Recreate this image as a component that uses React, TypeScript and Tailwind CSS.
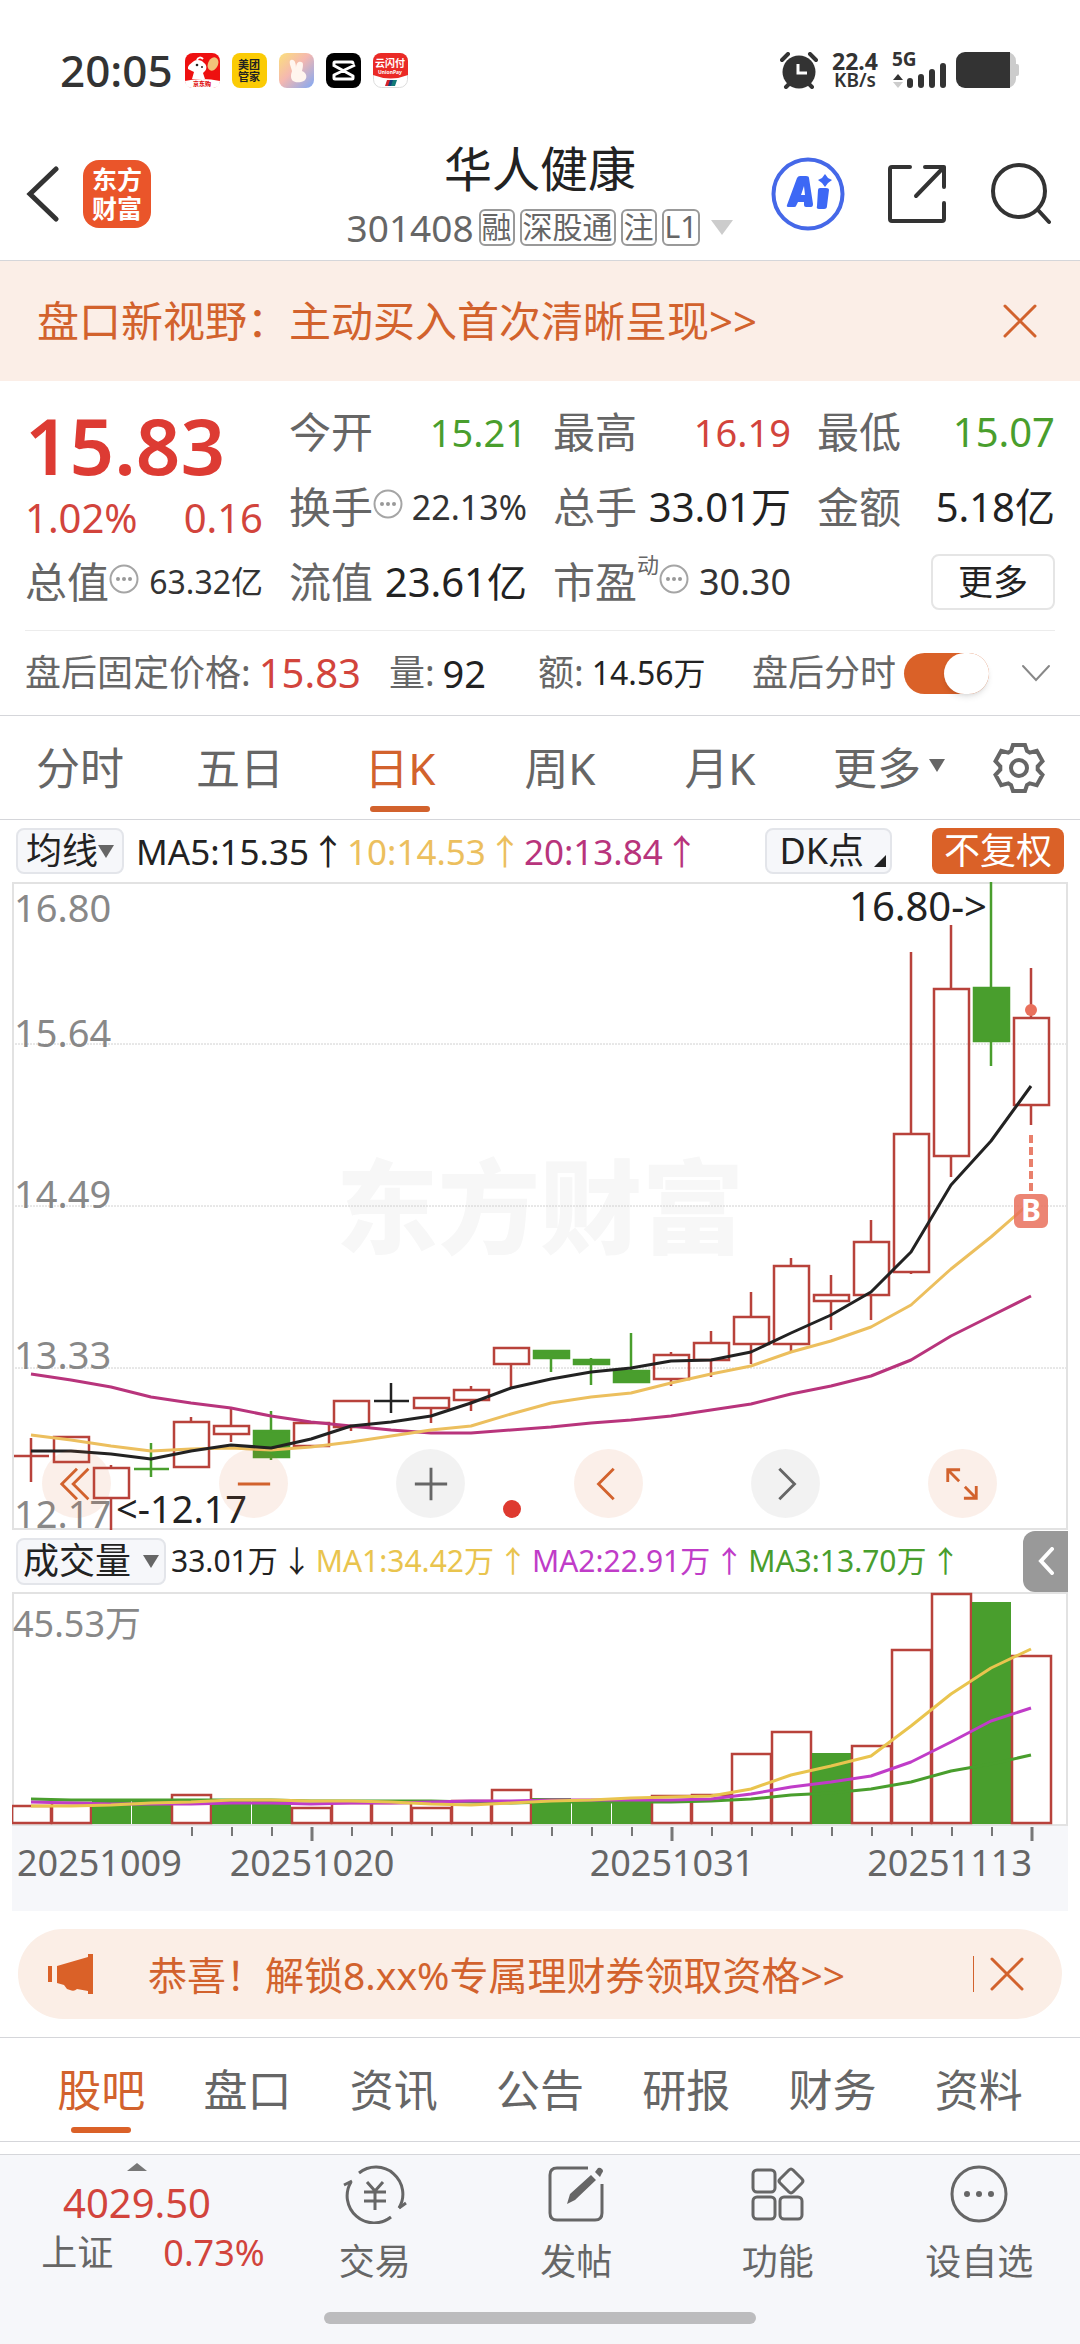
import type { ReactNode } from 'react'
import clsx from 'clsx'

type Tone = 'up' | 'down' | 'flat'

interface Candle {
  high: number
  top: number
  bottom: number
  low: number
  tone: Tone
}

const COLORS: Record<Tone, string> = { up: '#b8423b', down: '#499e2d', flat: '#222222' }

const STEP = 40
const FIRST_X = 19

const CANDLES: Candle[] = [
  { high: 556, top: 574, bottom: 574, low: 600, tone: 'up' },
  { high: 554, top: 555, bottom: 580, low: 580, tone: 'up' },
  { high: 583, top: 586, bottom: 616, low: 648, tone: 'up' },
  { high: 561, top: 587, bottom: 587, low: 595, tone: 'down' },
  { high: 535, top: 540, bottom: 585, low: 586, tone: 'up' },
  { high: 526, top: 544, bottom: 552, low: 560, tone: 'up' },
  { high: 529, top: 549, bottom: 575, low: 578, tone: 'down' },
  { high: 541, top: 541, bottom: 564, low: 564, tone: 'up' },
  { high: 519, top: 519, bottom: 545, low: 549, tone: 'up' },
  { high: 501, top: 519, bottom: 519, low: 531, tone: 'flat' },
  { high: 515, top: 516, bottom: 526, low: 541, tone: 'up' },
  { high: 504, top: 508, bottom: 518, low: 529, tone: 'up' },
  { high: 465, top: 466, bottom: 482, low: 506, tone: 'up' },
  { high: 468, top: 469, bottom: 476, low: 490, tone: 'down' },
  { high: 476, top: 478, bottom: 482, low: 503, tone: 'down' },
  { high: 451, top: 489, bottom: 500, low: 500, tone: 'down' },
  { high: 470, top: 473, bottom: 497, low: 504, tone: 'up' },
  { high: 449, top: 461, bottom: 478, low: 495, tone: 'up' },
  { high: 410, top: 435, bottom: 462, low: 482, tone: 'up' },
  { high: 376, top: 384, bottom: 462, low: 469, tone: 'up' },
  { high: 393, top: 413, bottom: 419, low: 448, tone: 'up' },
  { high: 338, top: 360, bottom: 413, low: 438, tone: 'up' },
  { high: 70, top: 252, bottom: 390, low: 392, tone: 'up' },
  { high: 43, top: 107, bottom: 274, low: 295, tone: 'up' },
  { high: 0, top: 106, bottom: 159, low: 184, tone: 'down' },
  { high: 86, top: 136, bottom: 223, low: 243, tone: 'up' },
]

const PRICE_LINES = [
  {
    color: '#b8347c',
    points: [492, 498, 505, 515, 521, 526, 534, 540, 544, 548, 551, 551, 548, 545, 541, 538, 534, 528, 522, 512, 504, 494, 478, 454, 434, 414],
  },
  {
    color: '#ecbf5e',
    points: [553, 558, 564, 569, 567, 566, 568, 565, 560, 554, 548, 544, 532, 521, 515, 511, 501, 492, 484, 470, 459, 445, 423, 387, 355, 320],
  },
  {
    color: '#222222',
    points: [569, 569, 572, 577, 569, 563, 566, 557, 544, 540, 534, 521, 506, 497, 490, 486, 479, 478, 470, 451, 433, 410, 370, 303, 259, 204],
  },
]

const VOLUME_TOPS = [214, 211, 207, 208, 203, 208, 208, 216, 211, 211, 216, 209, 198, 206, 208, 208, 204, 203, 162, 140, 161, 154, 58, 2, 10, 64]
const VOLUME_DOWN = [2, 3, 5, 6, 13, 14, 15, 20, 24]

const VOLUME_LINES = [
  {
    color: '#499e2d',
    points: [207, 208, 208, 208, 208, 208, 208, 209, 209, 209, 209, 210, 211, 210, 210, 210, 210, 209, 207, 203, 201, 197, 190, 179, 172, 163],
  },
  {
    color: '#c03cc8',
    points: [210, 211, 212, 212, 212, 211, 211, 212, 211, 211, 210, 209, 209, 208, 208, 208, 208, 207, 202, 195, 190, 184, 170, 150, 129, 116],
  },
  {
    color: '#e9c44e',
    points: [214, 214, 213, 211, 210, 208, 208, 209, 209, 210, 212, 213, 211, 209, 208, 206, 205, 204, 197, 183, 174, 164, 134, 102, 76, 57],
  },
]

const PRICE_LABELS = [
  { text: '16.80', y: 40 },
  { text: '15.64', y: 165 },
  { text: '14.49', y: 326 },
  { text: '13.33', y: 487 },
  { text: '12.17', y: 646 },
]

const toPoints = (ys: number[]) => ys.map((y, i) => `${FIRST_X + i * STEP},${y}`).join(' ')

function StatusBar() {
  return (
    <div className="flex h-[140px] items-center justify-between pr-[60px] pl-[60px] text-[#333]">
      <div className="flex items-center gap-[12px]">
        <span className="text-[44px] leading-none font-medium">20:05</span>
        <svg className="size-[35px]" viewBox="0 0 35 35" aria-hidden="true">
          <rect width="35" height="35" rx="8" fill="#ee1010" />
          <path d="M0 28Q17 24 35 28V28A7 7 0 0 1 28 35H7A7 7 0 0 1 0 28Z" fill="#fff" />
          <path d="M3 14c1-3 4-4 6-6 3-2 8-1 10 2 3 2 3 6 1 8l-2 2 2 6H7l2-7-6-3Z" fill="#fff" />
          <path d="M12 7c1-3 4-3 6-1" stroke="#fff" strokeWidth="2" fill="none" />
          <circle cx="12" cy="12" r="1.3" fill="#222" />
          <circle cx="17" cy="14" r="1" fill="#222" />
          <ellipse cx="28" cy="11" rx="5" ry="7" fill="#f2c27a" transform="rotate(25 28 11)" />
          <text x="17" y="33" fontSize="6" fontWeight="900" textAnchor="middle" fill="#e01010">京东购</text>
        </svg>
        <svg className="size-[35px]" viewBox="0 0 35 35" aria-hidden="true">
          <rect width="35" height="35" rx="8" fill="#fbcb05" />
          <text x="17" y="16" fontSize="11" fontWeight="700" textAnchor="middle" fill="#222">美团</text>
          <text x="17" y="28" fontSize="11" fontWeight="700" textAnchor="middle" fill="#222">管家</text>
        </svg>
        <svg className="size-[35px]" viewBox="0 0 35 35" aria-hidden="true">
          <defs>
            <linearGradient id="rabbit" x1="0" y1="0" x2="1" y2="1">
              <stop offset="0" stopColor="#fbe07a" />
              <stop offset="0.45" stopColor="#f5b8b0" />
              <stop offset="1" stopColor="#7fa8f5" />
            </linearGradient>
          </defs>
          <rect width="35" height="35" rx="8" fill="url(#rabbit)" />
          <path d="M12 7c4-1 5 4 5 8 0-4 2-7 5-6 3 0 2 5 1 9 6 2 6 10-1 11-7 1-10-1-10-6 0-3 1-4 1-5-1-4-4-10-1-11Z" fill="#fff5ee" />
        </svg>
        <svg className="size-[35px]" viewBox="0 0 35 35" aria-hidden="true">
          <rect width="35" height="35" rx="8" fill="#000" />
          <path d="M29 12 8 22v3q0 1 1 1h17q1 0 1-1v-2L7 12M8 13v-3q0-1 1-1h17q1 0 1 2" fill="none" stroke="#fff" strokeWidth="3" strokeLinejoin="round" />
        </svg>
        <svg className="size-[35px]" viewBox="0 0 35 35" aria-hidden="true">
          <rect x="0.5" y="0.5" width="34" height="34" rx="8" fill="#fff" stroke="#ddd" />
          <path d="M8 0h19a8 8 0 0 1 8 8v14q-17 7-35 0V8a8 8 0 0 1 8-8Z" fill="#ea2a26" />
          <text x="17" y="14" fontSize="10" fontWeight="700" textAnchor="middle" fill="#fff">云闪付</text>
          <text x="17" y="21" fontSize="5" fontWeight="700" textAnchor="middle" fill="#fff">UnionPay</text>
          <path d="m14 27h4l-2 6h-4Z" fill="#d8232a" />
          <path d="m17 27h4l-2 6h-4Z" fill="#12447e" />
          <path d="m20 27h4l-2 6h-4Z" fill="#127a78" />
        </svg>
      </div>
      <div className="flex items-center">
        <svg className="h-[37px] w-[38px]" viewBox="0 0 38 37" aria-hidden="true">
          <circle cx="19" cy="20" r="16.500" fill="#333" />
          <path d="M2 8 8 2M36 8l-6-6M6 35l5-5M32 35l-5-5" stroke="#333" strokeWidth="4" strokeLinecap="round" />
          <path d="M18 12v9h9" stroke="#fff" strokeWidth="3" fill="none" />
        </svg>
        <div className="ml-3.5 flex w-[46px] flex-col items-center font-bold">
          <span className="text-[23px] leading-[20px]">22.4</span>
          <span className="text-[19px] leading-[19px] font-semibold">KB/s</span>
        </div>
        <svg className="ml-3.5 h-[36px] w-[56px] overflow-visible" viewBox="0 0 56 36" aria-hidden="true">
          <text x="0" y="14" fontSize="19" fontWeight="700" fill="#333">5G</text>
          <path d="m6 22 5 6H1Z" fill="#333" />
          <path d="m6 36 5-6H1Z" fill="#ccc" />
          <path d="M18 29v4M29 25v8M40 20v13M51 14v19" stroke="#333" strokeWidth="6" strokeLinecap="round" />
        </svg>
        <svg className="ml-2 h-[36px] w-[64px]" viewBox="0 0 64 36" aria-hidden="true">
          <path d="M9 0h42a9 9 0 0 1 9 9v3h1q2 0 2 2v8q0 2-2 2h-1v3a9 9 0 0 1-9 9H9Z" fill="#ccc" />
          <path d="M9 0h45v36H9a9 9 0 0 1-9-9V9a9 9 0 0 1 9-9Z" fill="#333" />
        </svg>
      </div>
    </div>
  )
}

function Tag({ children }: { children: ReactNode }) {
  return (
    <span className="flex h-[37px] items-center rounded-md border-2 border-[#999] px-px text-[30px] leading-none">
      {children}
    </span>
  )
}

function Header() {
  return (
    <header className="grid h-[121px] grid-cols-[1fr_auto_1fr] items-center border-b border-[#d5d6da]">
      <div className="mb-3 flex items-center gap-[24px] pl-[26px]">
        <button type="button" aria-label="返回">
          <svg className="h-[56px] w-[33px]" viewBox="0 0 33 56" fill="none" stroke="#333" strokeWidth="5" strokeLinecap="round">
            <path d="M30 3 4 28l26 25" />
          </svg>
        </button>
        <a
          href="#home"
          className="flex size-[68px] flex-col items-center justify-center rounded-2xl bg-[#ea552a] text-[25px] leading-[29px] font-bold text-white"
        >
          <span>东方</span>
          <span>财富</span>
        </a>
      </div>
      <div className="mb-1 flex flex-col items-center">
        <h1 className="text-[48px] leading-[58px] text-[#222]">华人健康</h1>
        <div className="flex h-[58px] items-center gap-[5px] text-[#666]">
          <span className="text-[37px] leading-none">301408</span>
          <Tag>融</Tag>
          <Tag>深股通</Tag>
          <Tag>注</Tag>
          <Tag>L1</Tag>
          <svg className="ml-1.5 h-[15px] w-[22px]" viewBox="0 0 22 15" aria-hidden="true">
            <path d="M0 0h22L11 15Z" fill="#ccc" />
          </svg>
        </div>
      </div>
      <div className="mb-3 flex items-center justify-end gap-[42px] pr-[29px]">
        <button type="button" aria-label="AI 助手">
          <svg className="size-[74px]" viewBox="0 0 74 74">
            <circle cx="37" cy="37" r="34.500" fill="none" stroke="#4568e8" strokeWidth="4" />
            <path fillRule="evenodd" d="M26 21q1-2 3-2h6q3 0 3 2l4 26q0 3-2 3h-5q-2 0-2-2v-3h-6l-2 4q0 1-2 1h-5q-3 0-2-2Zm7 8-3 9h4Z" fill="#3d68f5" />
            <path d="M49 31h6q3 0 3 2l-2 16q0 3-3 3h-5q-3 0-2-3l1-16q0-2 2-2ZM54 17l3 4 4 2-4 3-3 4-3-4-4-3 4-2Z" fill="#3d68f5" />
          </svg>
        </button>
        <button type="button" aria-label="分享">
          <svg className="size-[60px]" viewBox="0 0 60 60" fill="none" stroke="#333" strokeWidth="4" strokeLinecap="round" strokeLinejoin="round">
            <path d="M23 3H5Q3 3 3 5v50q0 2 2 2h50q2 0 2-2V39M38 3h19v20M57 3 29 32" />
          </svg>
        </button>
        <button type="button" aria-label="搜索">
          <svg className="size-[62px]" viewBox="0 0 62 62" fill="none" stroke="#333" strokeWidth="4" strokeLinecap="round">
            <circle cx="30" cy="28" r="26" />
            <path d="m49 47 11 12" />
          </svg>
        </button>
      </div>
    </header>
  )
}

function CloseIcon() {
  return (
    <svg className="size-[34px]" viewBox="0 0 34 34" fill="none" stroke="#d2622d" strokeWidth="3" strokeLinecap="round">
      <path d="m2 2 30 30M32 2 2 32" />
    </svg>
  )
}

function Banner() {
  return (
    <div className="flex h-[120px] items-center justify-between bg-[#fbeee7] pr-[43px] pl-[37px] text-[#d2622d]">
      <a href="#news" className="text-[42px] leading-none">盘口新视野：主动买入首次清晰呈现&gt;&gt;</a>
      <button type="button" aria-label="关闭">
        <CloseIcon />
      </button>
    </div>
  )
}

function InfoDots() {
  return (
    <svg className="mb-1.5 size-[30px] shrink-0" viewBox="0 0 30 30" aria-hidden="true">
      <circle cx="15" cy="15" r="13.500" fill="none" stroke="#a5a5a5" strokeWidth="2" />
      <g fill="#999">
        <circle cx="9" cy="15" r="2" />
        <circle cx="15" cy="15" r="2" />
        <circle cx="21" cy="15" r="2" />
      </g>
    </svg>
  )
}

interface StatProps {
  label: string
  value: string
  sup?: string
  info?: boolean
  className?: string
}

function Stat({ label, value, sup, info, className = 'text-[40px] text-[#222]' }: StatProps) {
  return (
    <div className="flex h-[75px] items-center whitespace-nowrap">
      <span className="text-[42px] leading-none text-[#666]">{label}</span>
      {sup && <span className="mb-9 text-[22px] leading-none text-[#666]">{sup}</span>}
      {info && <InfoDots />}
      <span className={clsx('ml-auto leading-none', className)}>{value}</span>
    </div>
  )
}

function Quote() {
  return (
    <section className="border-b border-[#d5d6da] px-[25px] pt-[13px]">
      <div className="grid grid-cols-4 gap-x-[26px] border-b border-[#ececec] pb-[11px]">
        <div className="flex flex-col text-[#dd3b33]">
          <span className="mt-1 text-[78px] leading-[94px] font-semibold">15.83</span>
          <div className="flex h-[52px] items-center justify-between text-[40px] leading-none text-[#d2443c]">
            <span>1.02%</span>
            <span>0.16</span>
          </div>
          <Stat label="总值" info value="63.32亿" className="text-[32px] text-[#333]" />
        </div>
        <div>
          <Stat label="今开" value="15.21" className="text-[38px] text-[#499e2d]" />
          <Stat label="换手" info value="22.13%" className="text-[34px] text-[#333]" />
          <Stat label="流值" value="23.61亿" />
        </div>
        <div>
          <Stat label="最高" value="16.19" className="text-[38px] text-[#d2443c]" />
          <Stat label="总手" value="33.01万" />
          <Stat label="市盈" sup="动" info value="30.30" className="text-[36px] text-[#333]" />
        </div>
        <div>
          <Stat label="最低" value="15.07" className="text-[40px] text-[#499e2d]" />
          <Stat label="金额" value="5.18亿" />
          <div className="flex h-[75px] items-center justify-end">
            <button type="button" className="h-[56px] w-[124px] rounded-lg border-2 border-[#e5e5e5] text-[35px] leading-none text-[#222]">
              更多
            </button>
          </div>
        </div>
      </div>
      <div className="flex h-[84px] items-center text-[36px] leading-none whitespace-nowrap text-[#666]">
        <span className="flex items-center gap-2">
          盘后固定价格: <b className="text-[40px] font-normal text-[#d2443c]">15.83</b>
        </span>
        <span className="ml-[28px] flex items-center gap-2">
          量: <b className="text-[38px] font-normal text-[#222]">92</b>
        </span>
        <span className="ml-[52px] flex items-center gap-2">
          额: <b className="text-[32px] font-normal text-[#222]">14.56万</b>
        </span>
        <div className="ml-auto flex items-center">
          <label className="flex items-center gap-2">
            盘后分时
            <span className="relative flex">
              <input type="checkbox" role="switch" defaultChecked className="peer sr-only" />
              <span className="h-[41px] w-[85px] rounded-full bg-gray-300 peer-checked:bg-[#da6128]" />
              <span className="absolute top-0 left-0 h-[41px] w-[45px] rounded-full bg-white shadow-md peer-checked:right-0 peer-checked:left-auto" />
            </span>
          </label>
          <button type="button" aria-label="展开" className="mr-1 ml-8">
            <svg className="h-[18px] w-[30px]" viewBox="0 0 30 18" fill="none" stroke="#888" strokeWidth="2" strokeLinecap="round">
              <path d="m2 2 13 14L28 2" />
            </svg>
          </button>
        </div>
      </div>
    </section>
  )
}

function Caret({ className }: { className?: string }) {
  return (
    <svg className={clsx('h-[13px] w-[16px]', className)} viewBox="0 0 16 13" aria-hidden="true">
      <path d="M0 0h16L8 13Z" fill="#666" />
    </svg>
  )
}

const PERIODS = ['分时', '五日', '日K', '周K', '月K']

function PeriodTabs() {
  return (
    <nav className="grid h-[104px] grid-cols-[repeat(5,16fr)_17fr_11fr] border-b border-[#d5d6da] text-[44px] leading-none text-[#666]">
      {PERIODS.map((name) => (
        <button
          key={name}
          type="button"
          className={clsx('relative flex items-center justify-center', name === '日K' && 'text-[#d2622d]')}
        >
          {name}
          {name === '日K' && <span className="absolute bottom-[7px] h-[6px] w-[60px] rounded-full bg-[#d2622d]" />}
        </button>
      ))}
      <button type="button" className="flex items-center justify-center gap-2 pl-2">
        更多
        <Caret className="mb-1" />
      </button>
      <button type="button" aria-label="设置" className="flex items-center justify-center pr-3">
        <svg className="size-[54px]" viewBox="0 0 54 54" fill="none" stroke="#666" strokeWidth="4">
          <path d="M19 10 21 4H33L35 10 37.700 11.600 44.800 9.800 50.500 20.200 45.700 25.400V28.600L50.500 33.800 44.800 44.200 37.700 42.400 35 44 33 50H21L19 44 16.300 42.400 9.200 44.200 3.500 33.800 8.300 28.600V25.400L3.500 20.200 9.200 9.800 16.300 11.600Z" />
          <circle cx="27" cy="27" r="8" />
        </svg>
      </button>
    </nav>
  )
}

function Trend({ className, children, up = true }: { className?: string; children: ReactNode; up?: boolean }) {
  return (
    <span className={clsx('flex items-center', className)}>
      {children}
      <span className="flex w-[38px] justify-center">{up ? '↑' : '↓'}</span>
    </span>
  )
}

function PriceHeader() {
  return (
    <div className="flex h-[62px] items-center px-[16px] whitespace-nowrap">
      <button type="button" className="flex h-[46px] items-center rounded-lg border-2 border-[#e3e5ea] bg-[#f6f7fa] px-2 text-[36px] leading-none text-[#222]">
        均线
        <Caret />
      </button>
      <div className="ml-[12px] flex text-[35px] leading-none">
        <Trend className="text-[#222]">MA5:15.35</Trend>
        <Trend className="text-[#ecbf5e]">10:14.53</Trend>
        <Trend className="text-[#b8347c]">20:13.84</Trend>
      </div>
      <button type="button" className="ml-auto flex h-[46px] items-center gap-2.5 rounded-lg border-2 border-[#e3e5ea] bg-[#f6f7fa] pr-1 pl-3 text-[36px] leading-none text-[#222]">
        DK点
        <svg className="mt-5 size-[12px]" viewBox="0 0 12 12" aria-hidden="true">
          <path d="M12 0v12H0Z" fill="#222" />
        </svg>
      </button>
      <button type="button" className="ml-[40px] h-[46px] rounded-lg bg-[#da6128] px-3 text-[36px] leading-none text-white">
        不复权
      </button>
    </div>
  )
}

function PriceChart() {
  return (
    <svg className="block h-auto w-full overflow-visible" viewBox="0 0 1056 648" role="img" aria-label="日K线">
      <text x="528" y="364" fontSize="102" fontWeight="900" textAnchor="middle" fill="#f7f7f7">东方财富</text>
      <path d="M0 162h1056M0 324h1056M0 486h1056" stroke="#d0d0d0" strokeWidth="1" strokeDasharray="2 1" />
      <rect x="1" y="1" width="1054" height="646" fill="none" stroke="#e2e2e2" strokeWidth="2" />
      {CANDLES.map(({ high, top, bottom, low, tone }, i) => {
        const x = FIRST_X + i * STEP
        const color = COLORS[tone]
        if (top === bottom) {
          return <path key={i} d={`M${x} ${high}V${low}M${x - 17} ${top}h35`} stroke={color} strokeWidth="2.500" />
        }
        return (
          <g key={i} stroke={color} strokeWidth="2.500">
            <path d={`M${x} ${high}V${top}M${x} ${bottom}V${low}`} />
            <rect x={x - 17} y={top} width="35" height={bottom - top} fill={tone === 'down' ? color : 'none'} />
          </g>
        )
      })}
      {PRICE_LINES.map(({ color, points }) => (
        <polyline key={color} points={toPoints(points)} fill="none" stroke={color} strokeWidth="3" strokeLinejoin="round" />
      ))}
      <path d="M1019 253v60" stroke="#e9806c" strokeWidth="4" strokeDasharray="8 4" />
      <circle cx="1019" cy="128" r="6" fill="#e9705c" />
      <rect x="1002" y="312" width="34" height="34" rx="6" fill="#e9705c" opacity="0.85" />
      <text x="1019" y="339" fontSize="30" fontWeight="700" textAnchor="middle" fill="#fff">B</text>
      <circle cx="500" cy="627" r="9" fill="#de3a30" />
      <g fontSize="38" fill="#888">
        {PRICE_LABELS.map(({ text, y }) => (
          <text key={text} x="2" y={y}>{text}</text>
        ))}
      </g>
      <text x="104" y="641" fontSize="38" fill="#222">&lt;-12.17</text>
      <text x="975" y="39" fontSize="40" textAnchor="end" fill="#222">16.80-&gt;</text>
    </svg>
  )
}

const CHART_TOOLS = [
  { label: '最早', path: 'M20 4 4 20l16 16M32 4 16 20l16 16', warm: true },
  { label: '缩小', path: 'M3 20h34', warm: true },
  { label: '放大', path: 'M3 20h34M20 3v34', warm: false },
  { label: '左移', path: 'M26 4 10 20l16 16', warm: true },
  { label: '右移', path: 'M14 4l16 16-16 16', warm: false },
  { label: '全屏', path: 'M18 5H5v13M5 5l12 12M22 35h13V22M35 35 23 23', warm: true },
]

function ChartTools() {
  return (
    <div className="absolute inset-x-0 bottom-[12px] flex justify-between pr-[71px] pl-[30px]">
      {CHART_TOOLS.map(({ label, path, warm }) => (
        <button
          key={label}
          type="button"
          aria-label={label}
          className={clsx('flex size-[69px] items-center justify-center rounded-full', warm ? 'bg-[#d9622b]/10' : 'bg-black/5')}
        >
          <svg className="size-[38px]" viewBox="0 0 40 40" fill="none" stroke={warm ? '#d2622d' : '#666'} strokeWidth="3">
            <path d={path} />
          </svg>
        </button>
      ))}
    </div>
  )
}

function VolumeHeader() {
  return (
    <div className="flex h-[62px] items-center whitespace-nowrap pl-[4px]">
      <button type="button" className="flex h-[47px] items-center gap-3 rounded-lg border-2 border-[#e3e5ea] bg-[#f6f7fa] px-[5px] text-[36px] leading-none text-[#222]">
        成交量
        <Caret />
      </button>
      <div className="ml-[5px] flex text-[30px] leading-none">
        <Trend className="text-[#222]" up={false}>33.01万</Trend>
        <Trend className="text-[#e9c44e]">MA1:34.42万</Trend>
        <Trend className="text-[#c03cc8]">MA2:22.91万</Trend>
        <Trend className="text-[#499e2d]">MA3:13.70万</Trend>
      </div>
      <button type="button" aria-label="展开侧栏" className="ml-auto flex h-[61px] w-[45px] items-center justify-center rounded-l-xl bg-[#999]">
        <svg className="h-[28px] w-[16px]" viewBox="0 0 16 28" fill="none" stroke="#fff" strokeWidth="4" strokeLinecap="round">
          <path d="M14 2 3 14l11 12" />
        </svg>
      </button>
    </div>
  )
}

function VolumeChart() {
  const ticks = Array.from({ length: 22 }, (_, i) => 180 + i * STEP)
  return (
    <svg className="block h-auto w-full" viewBox="0 0 1056 319" role="img" aria-label="成交量">
      <rect x="0" y="234" width="1056" height="85" fill="#f6f7fa" />
      <rect x="1" y="1" width="1054" height="232" fill="none" stroke="#e2e2e2" strokeWidth="2" />
      {VOLUME_TOPS.map((top, i) => {
        const down = VOLUME_DOWN.includes(i)
        return down ? (
          <rect key={i} x={i * STEP} y={top} width="39" height={232 - top} fill={COLORS.down} />
        ) : (
          <rect key={i} x={i * STEP} y={top} width="39" height={231 - top} fill="none" stroke={COLORS.up} strokeWidth="2.500" />
        )
      })}
      {VOLUME_LINES.map(({ color, points }) => (
        <polyline key={color} points={toPoints(points)} fill="none" stroke={color} strokeWidth="3" strokeLinejoin="round" />
      ))}
      <text x="1" y="45" fontSize="36" fill="#888">45.53万</text>
      {ticks.map((x) => {
        const major = (x - 300) % 360 === 0
        return <path key={x} d={`M${x} 235v${major ? 14 : 9}`} stroke="#777" strokeWidth={major ? 3 : 2} />
      })}
      <g fontSize="36" fill="#666">
        <text x="5" y="284">20251009</text>
        <text x="300" y="284" textAnchor="middle">20251020</text>
        <text x="660" y="284" textAnchor="middle">20251031</text>
        <text x="1020" y="284" textAnchor="end">20251113</text>
      </g>
    </svg>
  )
}

function Promo() {
  return (
    <div className="mx-[18px] my-[18px] flex h-[90px] items-center rounded-full bg-[#fbeee6] pr-[38px] pl-[30px] text-[#d2622d]">
      <svg className="h-[40px] w-[46px]" viewBox="0 0 46 40" fill="#da6128" aria-hidden="true">
        <path d="M0 12h4v16H0ZM9 12 40 3V0h5v40h-5v-3l-11-2q-3 3-7 1l-3-1-3-4-7-2Z" />
      </svg>
      <a href="#promo" className="ml-[54px] text-[39px] leading-none whitespace-nowrap">恭喜！解锁8.xx%专属理财券领取资格&gt;&gt;</a>
      <span className="ml-auto h-[36px] w-px bg-[#d2622d]" />
      <button type="button" aria-label="关闭" className="ml-[16px]">
        <CloseIcon />
      </button>
    </div>
  )
}

const SECTIONS = ['股吧', '盘口', '资讯', '公告', '研报', '财务', '资料']

function SectionTabs() {
  return (
    <nav className="flex h-[105px] border-y border-[#d5d6da] px-[28px] text-[44px] leading-none text-[#666]">
      {SECTIONS.map((name, i) => (
        <button key={name} type="button" className={clsx('relative flex flex-1 items-center justify-center', i === 0 && 'text-[#d2622d]')}>
          {name}
          {i === 0 && <span className="absolute bottom-[8px] h-[6px] w-[60px] rounded-full bg-[#da6128]" />}
        </button>
      ))}
    </nav>
  )
}

const ACTIONS: { name: string; icon: ReactNode }[] = [
  {
    name: '交易',
    icon: (
      <>
        <path d="M17 9A27 27 0 0 1 57 44M49 53A27 27 0 0 1 9 18" />
        <path d="M2 21l8-4M57 44l7-5" />
        <path d="m25 18 8 9 8-9M33 27v19M22 28h22M22 37h22" />
      </>
    ),
  },
  {
    name: '发帖',
    icon: (
      <>
        <path d="M45 4H14Q7 4 7 11v38q0 7 7 7h38q7 0 7-7V20" />
        <path d="m24 40 3-10 21-19 5 5-21 20ZM52 8l3-4q2-1 4 1t0 4l-2 4Z" fill="#666" stroke="none" />
      </>
    ),
  },
  {
    name: '功能',
    icon: (
      <>
        <rect x="8" y="6" width="22" height="22" rx="4" />
        <rect x="8" y="33" width="22" height="22" rx="4" />
        <rect x="35" y="33" width="22" height="22" rx="4" />
        <path d="M44 6q2-2 4 0l9 9q2 2 0 4l-9 9q-2 2-4 0l-9-9q-2-2 0-4Z" />
      </>
    ),
  },
  {
    name: '设自选',
    icon: (
      <>
        <circle cx="33" cy="30" r="27" />
        <g fill="#666" stroke="none">
          <circle cx="21" cy="30" r="3" />
          <circle cx="33" cy="30" r="3" />
          <circle cx="45" cy="30" r="3" />
        </g>
      </>
    ),
  },
]

function BottomBar() {
  return (
    <footer className="mt-[12px] border-t border-[#d5d6da] bg-[#f6f7fa] pb-[21px]">
      <div className="flex h-[157px]">
        <a href="#index" className="flex w-[274px] flex-col items-center pt-[8px] leading-none text-[#d2443c]">
          <svg className="h-[8px] w-[20px]" viewBox="0 0 20 8" aria-hidden="true">
            <path d="M0 8h20L10 0Z" fill="#777" />
          </svg>
          <span className="mt-[12px] text-[40px]">4029.50</span>
          <span className="mt-[12px] ml-[32px] flex items-center gap-[50px] text-[36px]">
            <span className="text-[#666]">上证</span>
            <span>0.73%</span>
          </span>
        </a>
        {ACTIONS.map(({ name, icon }) => (
          <button key={name} type="button" className="flex flex-1 flex-col items-center pt-[9px] text-[36px] leading-none text-[#666]">
            <svg className="h-[60px] w-[66px]" viewBox="0 0 66 60" fill="none" stroke="#666" strokeWidth="3" aria-hidden="true">
              {icon}
            </svg>
            <span className="mt-[20px]">{name}</span>
          </button>
        ))}
      </div>
      <div className="mx-auto h-[12px] w-2/5 rounded-full bg-[#bcbcbe]" />
    </footer>
  )
}

export default function App() {
  return (
    <div className="min-h-screen bg-white font-['Noto_Sans','Noto_Sans_CJK_SC',sans-serif]" lang="zh-CN">
      <StatusBar />
      <Header />
      <Banner />
      <Quote />
      <PeriodTabs />
      <PriceHeader />
      <main className="px-[12px]">
        <div className="relative">
          <PriceChart />
          <ChartTools />
        </div>
        <VolumeHeader />
        <VolumeChart />
      </main>
      <Promo />
      <SectionTabs />
      <BottomBar />
    </div>
  )
}
